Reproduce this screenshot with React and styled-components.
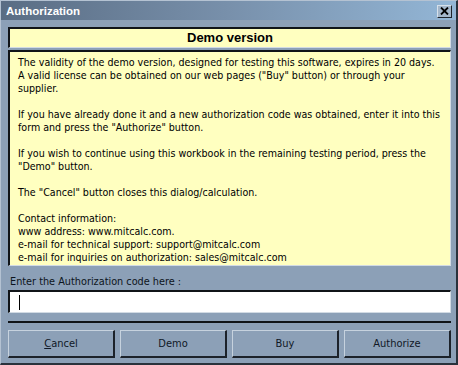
import React from "react";
import styled, { createGlobalStyle } from "styled-components";

const Global = createGlobalStyle`
  html, body { margin: 0; padding: 0; background: #8ca0b7; }
  * { box-sizing: border-box; }
`;

const Window = styled.div`
  width: 458px;
  height: 365px;
  background: #8ca0b7;
  border-top: 1px solid #b4c2d2;
  border-left: 1px solid #b4c2d2;
  border-right: 2px solid #2a323c;
  border-bottom: 2px solid #2a323c;
  display: flex;
  flex-direction: column;
  font-family: "DejaVu Sans Condensed", "DejaVu Sans", sans-serif;
`;

const TitleBar = styled.div`
  height: 19px;
  flex: none;
  display: flex;
  align-items: center;
  justify-content: space-between;
  padding: 0 4px 0 5px;
  background: linear-gradient(to right, #5a6d84 0%, #7890ab 50%, #93b6d6 100%);
`;

const Title = styled.span`
  color: #ffffff;
  font-family: "Liberation Sans", Arial, sans-serif;
  font-weight: bold;
  font-size: 11.5px;
`;

const CloseButton = styled.div`
  width: 15px;
  height: 13px;
  margin-top: 1px;
  background: #a3b6ca;
  border-top: 1px solid #d6e0ea;
  border-left: 1px solid #d6e0ea;
  border-right: 1px solid #1e242c;
  border-bottom: 1px solid #1e242c;
  display: flex;
  align-items: center;
  justify-content: center;
`;

const Content = styled.div`
  flex: 1;
  display: flex;
  flex-direction: column;
  padding: 7px 5px 0 7px;
`;

const Sunken = styled.div`
  border-top: 2px solid #101418;
  border-left: 2px solid #101418;
  border-right: 1px solid #d2dbe4;
  border-bottom: 1px solid #d2dbe4;
`;

const Header = styled(Sunken)`
  height: 21px;
  flex: none;
  background: #ffffc0;
  display: flex;
  align-items: center;
  justify-content: center;
  font-family: "Liberation Sans", Arial, sans-serif;
  font-weight: bold;
  font-size: 13px;
  color: #000;
  padding-bottom: 1px;
`;

const TextBox = styled(Sunken)`
  margin-top: 2px;
  height: 216px;
  flex: none;
  background: #ffffc0;
  padding: 4px 0 0 8px;
  font-size: 10.6px;
  color: #000;
  overflow: hidden;
`;

const Line = styled.div`
  height: 13px;
  line-height: 13px;
  white-space: nowrap;
`;

const Label = styled.div`
  margin-top: 9px;
  height: 14px;
  line-height: 14px;
  padding-left: 2px;
  font-size: 10.8px;
  color: #0c1420;
`;

const Input = styled(Sunken)`
  margin-top: 1px;
  height: 23px;
  flex: none;
  background: #ffffff;
  display: flex;
  align-items: center;
  padding-left: 9px;
`;

const Caret = styled.div`
  width: 1px;
  height: 15px;
  background: #000;
`;

const Separator = styled.div`
  margin-top: 8px;
  height: 2px;
  flex: none;
  background: #101418;
`;

const ButtonRow = styled.div`
  margin-top: 7px;
  display: grid;
  grid-template-columns: repeat(4, 107px);
  column-gap: 5px;
`;

const Button = styled.div`
  height: 28px;
  background: #8ca0b7;
  border-top: 1px solid #c6d2de;
  border-left: 1px solid #c6d2de;
  border-right: 2px solid #1c222a;
  border-bottom: 2px solid #1c222a;
  display: flex;
  align-items: center;
  justify-content: center;
  font-size: 11px;
  color: #101826;
  padding-bottom: 1px;
`;

const U = styled.span`
  text-decoration: underline;
`;

const lines = [
  "The validity of the demo version, designed for testing this software, expires in 20 days.",
  "A valid license can be obtained on our web pages (\"Buy\" button) or through your",
  "supplier.",
  "",
  "If you have already done it and a new authorization code was obtained, enter it into this",
  "form and press the \"Authorize\" button.",
  "",
  "If you wish to continue using this workbook in the remaining testing period, press the",
  "\"Demo\" button.",
  "",
  "The \"Cancel\" button closes this dialog/calculation.",
  "",
  "Contact information:",
  "www address: www.mitcalc.com.",
  "e-mail for technical support: support@mitcalc.com",
  "e-mail for inquiries on authorization: sales@mitcalc.com",
];

export default function App() {
  return (
    <>
      <Global />
      <Window>
        <TitleBar>
          <Title>Authorization</Title>
          <CloseButton>
            <svg width="9" height="8" viewBox="0 0 9 8">
              <path d="M1 0.5 L8 7.5 M8 0.5 L1 7.5" stroke="#000" strokeWidth="1.8" />
            </svg>
          </CloseButton>
        </TitleBar>
        <Content>
          <Header>Demo version</Header>
          <TextBox>
            {lines.map((l, i) => (
              <Line key={i}>{l}</Line>
            ))}
          </TextBox>
          <Label>Enter the Authorization code here :</Label>
          <Input>
            <Caret />
          </Input>
          <Separator />
          <ButtonRow>
            <Button>
              <span>
                <U>C</U>ancel
              </span>
            </Button>
            <Button>Demo</Button>
            <Button>Buy</Button>
            <Button>Authorize</Button>
          </ButtonRow>
        </Content>
      </Window>
    </>
  );
}
